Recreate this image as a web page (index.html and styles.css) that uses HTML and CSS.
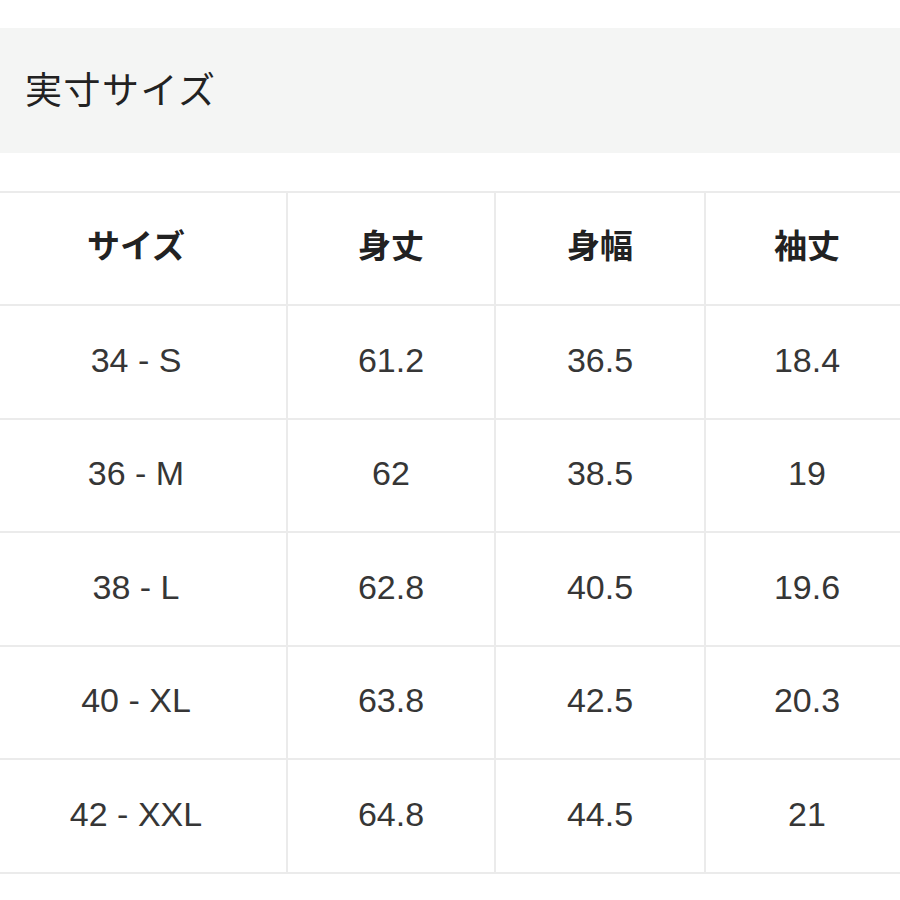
FILE: index.html
```html
<!DOCTYPE html>
<html lang="ja">
<head>
<meta charset="utf-8">
<link rel="stylesheet" href="styles.css">
</head>
<body>
<div class="title-band"><h1 class="title">実寸サイズ</h1></div>
<div class="size-table">
  <div class="cell head">サイズ</div>
  <div class="cell head">身丈</div>
  <div class="cell head">身幅</div>
  <div class="cell head">袖丈</div>

  <div class="cell">34 - S</div>
  <div class="cell">61.2</div>
  <div class="cell">36.5</div>
  <div class="cell">18.4</div>

  <div class="cell">36 - M</div>
  <div class="cell">62</div>
  <div class="cell">38.5</div>
  <div class="cell">19</div>

  <div class="cell">38 - L</div>
  <div class="cell">62.8</div>
  <div class="cell">40.5</div>
  <div class="cell">19.6</div>

  <div class="cell">40 - XL</div>
  <div class="cell">63.8</div>
  <div class="cell">42.5</div>
  <div class="cell">20.3</div>

  <div class="cell">42 - XXL</div>
  <div class="cell">64.8</div>
  <div class="cell">44.5</div>
  <div class="cell">21</div>
</div>
</body>
</html>
```
FILE: styles.css
```css
html, body {
  margin: 0;
  padding: 0;
  background: #ffffff;
  overflow: hidden;
}
body {
  font-family: "Liberation Sans", "Noto Sans CJK JP", sans-serif;
  color: #2a2a2a;
}
.title-band {
  margin-top: 28px;
  height: 125px;
  box-sizing: border-box;
  padding-bottom: 4px;
  background: #f4f5f4;
  display: flex;
  align-items: center;
  padding-left: 25px;
}
.title {
  margin: 0;
  font-family: "Noto Sans CJK JP", sans-serif;
  font-weight: 400;
  font-size: 37px;
  line-height: 1;
  color: #222222;
  letter-spacing: 1.5px;
}
.size-table {
  margin-top: 38px;
  margin-left: -14px;
  width: 924px;
  display: grid;
  grid-template-columns: 302px 208px 210px 204px;
  grid-template-rows: 113px repeat(5, 113.5px);
  border-top: 2px solid #ebebeb;
}
.cell {
  box-sizing: border-box;
  border-right: 2px solid #ebebeb;
  border-bottom: 2px solid #ebebeb;
  padding-bottom: 3px;
  display: flex;
  align-items: center;
  justify-content: center;
  font-size: 34px;
  color: #363636;
}
.cell.head {
  padding-bottom: 9px;
  font-family: "Noto Sans CJK JP", sans-serif;
  font-weight: 700;
  font-size: 33px;
  color: #222222;
}
```
